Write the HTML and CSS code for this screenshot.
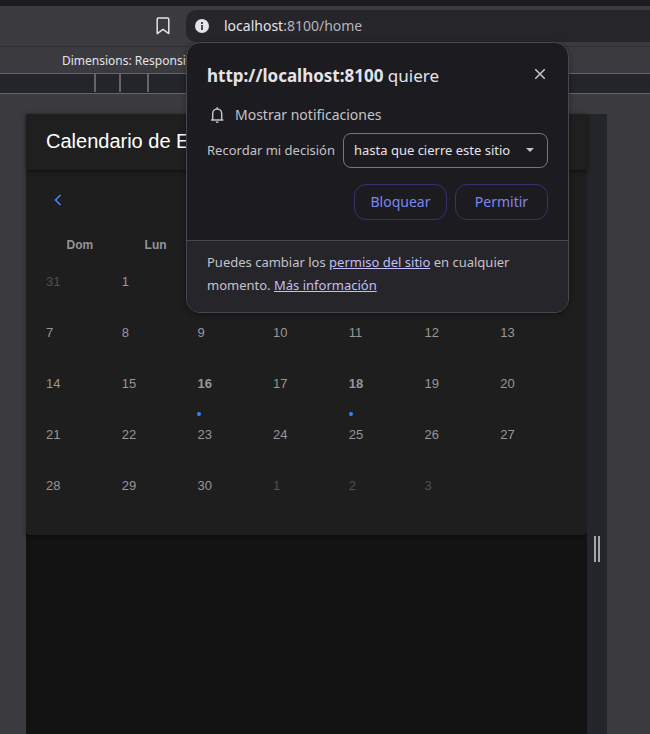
FILE: index.html
```html
<!DOCTYPE html>
<html lang="es">
<head>
<meta charset="utf-8">
<title>Calendario</title>
<link rel="stylesheet" href="styles.css">
</head>
<body>
<header class="toolbar">
  <button class="bookmark" aria-label="Guardar marcador">
    <svg width="14" height="18" viewBox="0 0 14 18" fill="none" stroke="currentColor" stroke-width="1.5" stroke-linejoin="round"><path d="M1.2 2.2Q1.2 1 2.4 1h9.2q1.2 0 1.2 1.2V16.6L7 12.4 1.2 16.6z"/></svg>
  </button>
  <div class="address">
    <svg width="14" height="14" viewBox="0 0 14 14"><circle cx="7" cy="7" r="7" fill="#e4e3e9"/><path d="M6 3h2v2H6zM6 6h2v5H6z" fill="#4b4a51"/></svg>
    <span class="url">localhost<span class="path">:8100/home</span></span>
    <section class="prompt" role="dialog" aria-labelledby="prompt-title">
      <div class="prompt-main">
        <div class="prompt-head">
          <h1 id="prompt-title"><b>http://localhost:8100</b> quiere</h1>
          <button class="close" aria-label="Cerrar"><svg width="10" height="10" viewBox="0 0 10 10" stroke="currentColor" stroke-width="1.5"><path d="M0 0l10 10M10 0L0 10"/></svg></button>
        </div>
        <div class="permission">
          <svg width="20" height="20" viewBox="0 0 20 20" fill="none" stroke="currentColor" stroke-width="1.5"><path d="M4 15h12.4M5.700 15V8.500a4.500 4.500 0 0 1 9 0V15M10.200 4V2.200"/><path d="M8.700 16.500h3a1.500 1.500 0 0 1-3 0z" fill="currentColor" stroke="none"/></svg>
          <span>Mostrar notificaciones</span>
        </div>
        <div class="remember">
          <label for="duration">Recordar mi decisión</label>
          <div class="select-wrap">
            <select id="duration"><option>hasta que cierre este sitio</option></select>
            <svg class="caret" width="8" height="4" viewBox="0 0 8 4"><path d="M0 0h8L4 4z" fill="currentColor"/></svg>
          </div>
        </div>
        <div class="actions">
          <button>Bloquear</button>
          <button>Permitir</button>
        </div>
      </div>
      <p class="prompt-note">Puedes cambiar los <a href="#">permiso del sitio</a> en cualquier momento. <a href="#">Más información</a></p>
    </section>
  </div>
</header>
<div class="device-bar">Dimensions: Responsive</div>
<div class="ruler"><i></i><i></i><i></i></div>
<div class="stage">
  <main class="screen">
    <h2 class="app-title">Calendario de Eventos</h2>
    <section class="card">
      <button class="prev" aria-label="Mes anterior"><svg width="8" height="12" viewBox="0 0 8 12" fill="none" stroke="currentColor" stroke-width="1.5"><path d="M6.500 1L1.500 6l5 5"/></svg></button>
      <table class="calendar">
        <thead><tr><th>Dom</th><th>Lun</th><th></th><th></th><th></th><th></th><th></th></tr></thead>
        <tbody>
          <tr><td class="other">31</td><td>1</td><td></td><td></td><td></td><td></td><td></td></tr>
          <tr><td>7</td><td>8</td><td>9</td><td>10</td><td>11</td><td>12</td><td>13</td></tr>
          <tr><td>14</td><td>15</td><td class="event">16</td><td>17</td><td class="event">18</td><td>19</td><td>20</td></tr>
          <tr><td>21</td><td>22</td><td>23</td><td>24</td><td>25</td><td>26</td><td>27</td></tr>
          <tr><td>28</td><td>29</td><td>30</td><td class="other">1</td><td class="other">2</td><td class="other">3</td><td></td></tr>
        </tbody>
      </table>
    </section>
  </main>
  <div class="resizer"><i></i><i></i></div>
</div>
</body>
</html>
```

FILE: styles.css
```css
* { box-sizing: border-box; }

body {
  margin: 0;
  min-height: 100vh;
  display: flex;
  flex-direction: column;
  background: #3b3a3f;
  color: #e4e3e9;
  font-family: "Noto Sans", sans-serif;
  overflow: hidden;
}

button { padding: 0; border: 0; background: none; color: inherit; font: inherit; }
svg { display: block; flex: none; }

.toolbar {
  display: flex;
  align-items: center;
  gap: 16px;
  height: 47px;
  padding: 4px 0 5px 156px;
  border-top: 6px solid #1c1b20;
  border-bottom: 1px solid #302f34;
}

.address {
  position: relative;
  flex: 1;
  display: flex;
  align-items: center;
  gap: 15px;
  height: 32px;
  padding-left: 9px;
  border-radius: 10px 0 0 10px;
  background: #26252a;
}

.url { font-size: 14px; }
.path { color: #b5b4ba; }

.prompt {
  position: absolute;
  top: 32px;
  left: 0;
  z-index: 2;
  width: 383px;
  border: 1px solid #48474e;
  border-radius: 14px;
  background: #1c1b1f;
  box-shadow: 0 2px 6px rgba(0, 0, 0, .35);
  overflow: hidden;
}

.prompt-main { padding: 20px; }

.prompt-head { display: flex; justify-content: space-between; align-items: flex-start; }

.prompt-head h1 {
  margin: 0;
  font-size: 17px;
  font-weight: 400;
  line-height: 26px;
}

.close { display: flex; justify-content: center; width: 16px; padding-top: 6px; color: #c8c7cd; }

.permission {
  display: flex;
  align-items: center;
  gap: 8px;
  margin-top: 16px;
  color: #c4c3c9;
  font-size: 14px;
  line-height: 20px;
}

.remember {
  display: flex;
  align-items: center;
  gap: 8px;
  margin-top: 8px;
  color: #c4c3c9;
  font-size: 13px;
}

.select-wrap { position: relative; flex: 1; }

select {
  display: block;
  width: 100%;
  height: 35px;
  padding: 0 10px;
  appearance: none;
  border: 1px solid #77767d;
  border-radius: 8px;
  background: transparent;
  color: #e4e3e9;
  font: 13px "Noto Sans", sans-serif;
}

.caret { position: absolute; top: 15px; right: 14px; pointer-events: none; }

.actions {
  display: flex;
  justify-content: flex-end;
  gap: 8px;
  margin-top: 16px;
}

.actions button {
  width: 93px;
  height: 36px;
  border: 1px solid #33346e;
  border-radius: 12px;
  color: #7c87ee;
  font-size: 14px;
}

.prompt-note {
  margin: 0;
  padding: 10px 20px 15px;
  border-top: 1px solid #48474e;
  background: #26252a;
  color: #c4c3c9;
  font-size: 13px;
  line-height: 23px;
}

.prompt-note a { color: #c3bff8; }

.device-bar {
  height: 26px;
  padding-left: 62px;
  font-size: 12px;
  line-height: 27px;
}

.ruler {
  display: flex;
  gap: 23px;
  height: 21px;
  padding-left: 94px;
  border: solid #65646a;
  border-width: 1px 0;
  background: #24252a;
}

.ruler i { width: 2px; height: 18px; background: #65646a; }
.ruler i:last-child { margin-left: 3px; }

.stage { flex: 1; display: flex; padding: 20px 43px 0 26px; }

.screen {
  flex: 1;
  background: #131313;
  font-family: "Liberation Sans", sans-serif;
}

.app-title {
  position: relative;
  margin: 0;
  padding: 0 0 2px 20px;
  background: #1f1f1f;
  box-shadow: 0 1px 4px rgba(0, 0, 0, .6);
  color: #fff;
  font-size: 20px;
  font-weight: 400;
  line-height: 54px;
}

.card {
  padding: 16px 15px 14px 16px;
  border-radius: 0 0 4px 4px;
  background: #1e1e1e;
  box-shadow: 0 2px 4px rgba(0, 0, 0, .4);
}

.prev {
  display: flex;
  align-items: center;
  justify-content: center;
  width: 32px;
  height: 28px;
  color: #428cff;
}

.calendar {
  width: 100%;
  table-layout: fixed;
  border-collapse: collapse;
  color: #979797;
  font-size: 13px;
}

th { height: 42px; padding: 20px 0 0; font-size: 12px; line-height: 22px; color: #92949c; }
td { position: relative; height: 51px; padding: 8px 4px; line-height: 16px; vertical-align: top; }
tbody tr:first-child td { padding-top: 18px; height: 61px; }

.other { color: #505050; }
.event { font-weight: 700; }

.event::after {
  content: "";
  position: absolute;
  left: 4px;
  bottom: 3px;
  width: 4px;
  height: 4px;
  border-radius: 50%;
  background: #3880ff;
}

.resizer {
  display: flex;
  justify-content: center;
  align-items: flex-start;
  gap: 2px;
  width: 20px;
  padding-top: 422px;
  background: #24252a;
}

.resizer i { width: 2px; height: 26px; background: #a6a6a6; }
```
